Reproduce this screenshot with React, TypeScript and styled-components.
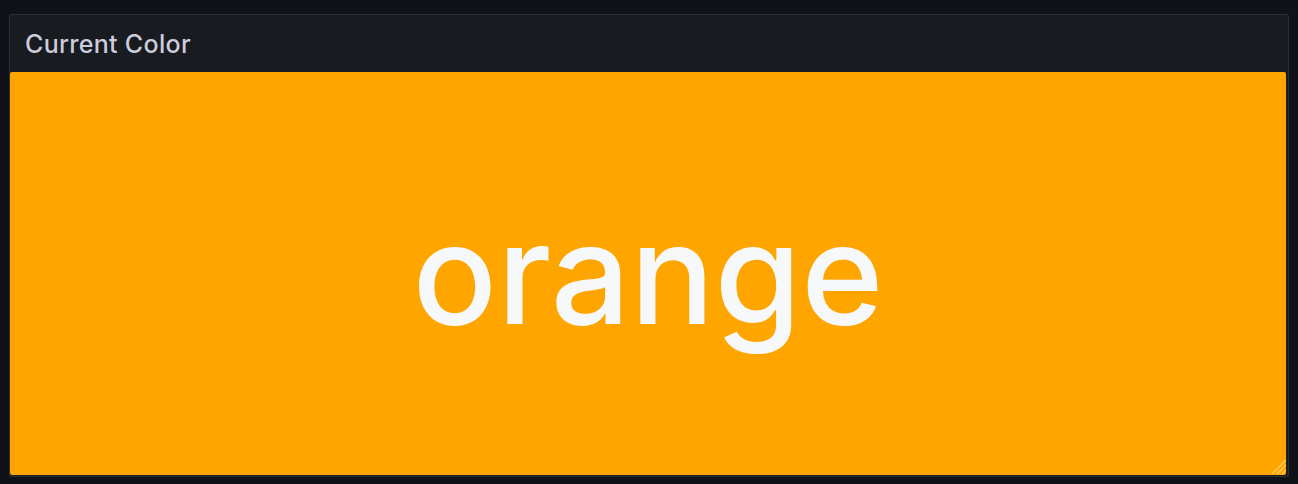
import styled, { createGlobalStyle } from 'styled-components'

const GlobalStyle = createGlobalStyle`
  html, body {
    margin: 0;
    padding: 0;
    background: #111217;
  }
  body {
    font-family: Inter, "Noto Sans", sans-serif;
  }
`

export default function App() {
  return (
    <Page>
      <GlobalStyle />
      <Panel>
        <Header>
          <Title>Current Color</Title>
        </Header>
        <Body>
          <ColorBox color="#ffa500">
            <Value>orange</Value>
          </ColorBox>
          <ResizeHandle width="16" height="16" viewBox="0 0 16 16">
            <path d="M15 6 L6 15 M15 11 L11 15 M15 1 L1 15" stroke="rgba(255,255,255,0.4)" strokeWidth="1.3" />
          </ResizeHandle>
        </Body>
      </Panel>
    </Page>
  )
}

const Page = styled.div`
  width: 1298px;
  height: 484px;
  box-sizing: border-box;
  padding: 14px 9px 7px 9px;
  display: flex;
`

const Panel = styled.div`
  flex: 1;
  display: flex;
  flex-direction: column;
  background: #181b1f;
  border: 1px solid rgba(204, 204, 220, 0.12);
  border-radius: 3px;
  overflow: hidden;
`

const Header = styled.div`
  height: 57px;
  display: flex;
  align-items: center;
  padding: 0 15px;
  flex-shrink: 0;
`

const Title = styled.h2`
  margin: 0;
  font-size: 25px;
  font-weight: 500;
  letter-spacing: 0.3px;
  color: #ccccdc;
`

const Body = styled.div`
  position: relative;
  flex: 1;
  display: flex;
  padding: 0 2px 1px 0;
`

const ColorBox = styled.div<{ color: string }>`
  flex: 1;
  display: flex;
  align-items: center;
  justify-content: center;
  background: ${(p) => p.color};
  border-radius: 2px;
`

const Value = styled.div`
  font-size: 140px;
  font-weight: 500;
  color: #f7f8fa;
  line-height: 1;
  margin-top: -2px;
`

const ResizeHandle = styled.svg`
  position: absolute;
  right: 1px;
  bottom: 1px;
`
